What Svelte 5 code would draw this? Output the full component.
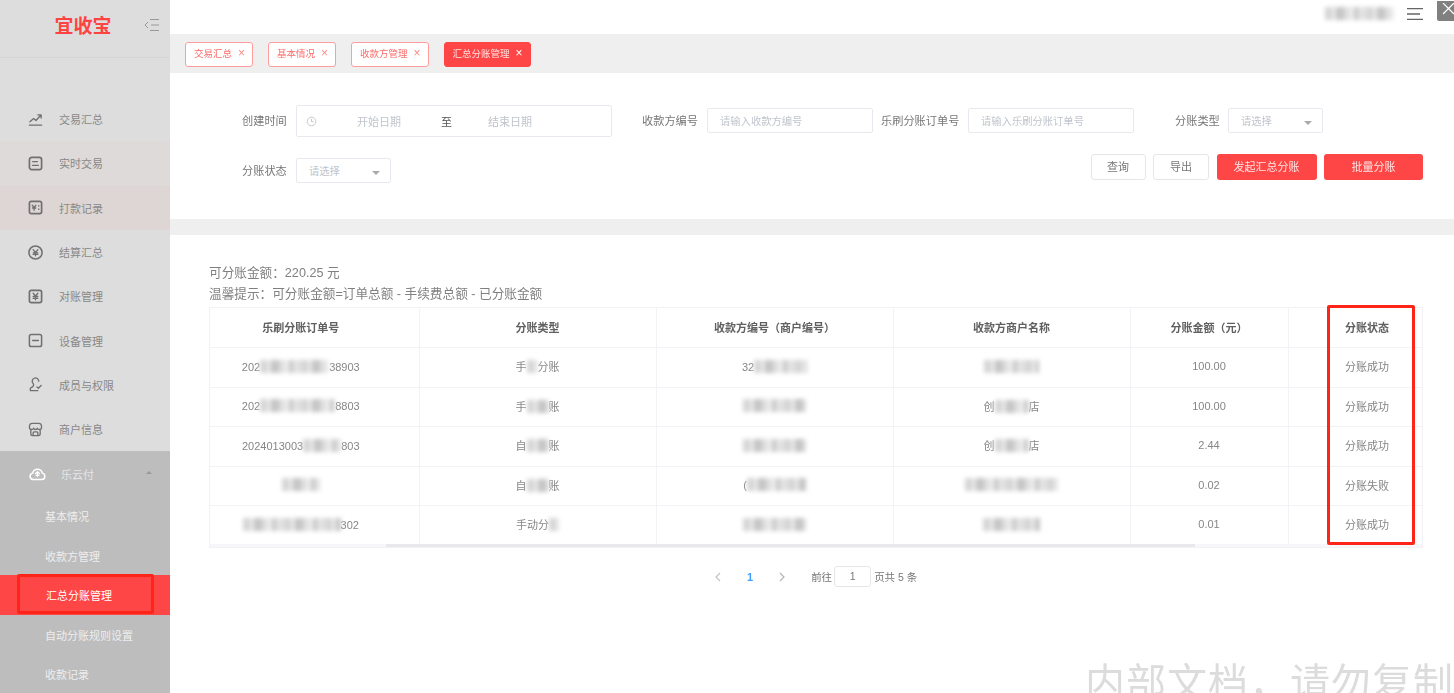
<script>
  const menu = [
    { label: '交易汇总', icon: 'trend', tint: '' },
    { label: '实时交易', icon: 'doc', tint: 'tint1' },
    { label: '打款记录', icon: 'pay', tint: 'tint2' },
    { label: '结算汇总', icon: 'coin', tint: '' },
    { label: '对账管理', icon: 'yen', tint: '' },
    { label: '设备管理', icon: 'device', tint: '' },
    { label: '成员与权限', icon: 'user', tint: '' },
    { label: '商户信息', icon: 'shop', tint: '' }
  ];
  const subs = ['基本情况', '收款方管理', '汇总分账管理', '自动分账规则设置', '收款记录'];
  const tabs = ['交易汇总', '基本情况', '收款方管理', '汇总分账管理'];
  const heads = ['乐刷分账订单号', '分账类型', '收款方编号（商户编号）', '收款方商户名称', '分账金额（元）', '分账状态'];
  // A number is a smudged stretch of that width; a string is legible text.
  const rows = [
    [['202', 69, '38903'], ['手', 11, '分账'], ['32', 53], [55], ['100.00'], ['分账成功']],
    [['202', 75, '8803'], ['手', 22, '账'], [63], ['创', 34, '店'], ['100.00'], ['分账成功']],
    [['2024013003', 38, '803'], ['自', 22, '账'], [63], ['创', 34, '店'], ['2.44'], ['分账成功']],
    [[38], ['自', 22, '账'], ['(', 59], [93], ['0.02'], ['分账失败']],
    [[98, '302'], ['手动分', 10], [63], [57], ['0.01'], ['分账成功']]
  ];
</script>

{#snippet icon(name)}
  <svg class="mi" viewBox="0 0 16 16" fill="none" stroke="currentColor" stroke-width="1.4" stroke-linecap="round" stroke-linejoin="round">
    {#if name === 'trend'}
      <path d="M2 10.500 6 7l2.500 2L13.500 3.500M10.500 3H14v3.500M1.500 14h13" />
    {:else if name === 'doc'}
      <rect x="1.500" y="1.500" width="13" height="13" rx="2.500" stroke-width="1.800" /><path d="M5 6h5M5 10h6" />
    {:else if name === 'pay'}
      <rect x="1.500" y="1.500" width="13" height="13" rx="2" stroke-width="1.800" /><path d="M4.500 5.500 6.500 8l2-2.500M6.500 8v3M4.800 8.500h3.400M11.500 6v.5M11.500 9.500v.5" />
    {:else if name === 'coin'}
      <circle cx="8" cy="8" r="7" stroke-width="1.600" /><path d="M5.500 5 8 8l2.500-3M8 8v3.500M5.500 8.300h5M5.500 10h5" />
    {:else if name === 'yen'}
      <rect x="1.500" y="1.500" width="13" height="13" rx="2" stroke-width="1.800" /><path d="M5.500 4.500 8 7.500l2.500-3M8 7.500v4M5.500 8h5M5.500 10h5" />
    {:else if name === 'device'}
      <path d="M1.500 3.500q0-2 2-2h9q2 0 2 2v9q0 2-2 2h-9q-2 0-2-2zM5 8h6" stroke-width="1.600" />
    {:else if name === 'user'}
      <path d="M11.500 4.500a3.500 3.500 0 1 0-6 2.500c.8 1 .6 2.500-.5 3.300L2.500 12v2.500h8M9.500 10.500l1.500 1.500 3-3" />
    {:else if name === 'shop'}
      <path d="M1.500 5.500q0-4 3-4h7q3 0 3 4 0 2.500-2.300 2.500-1.800 0-2.300-1.500-.4 1.500-1.900 1.500t-1.900-1.500q-.5 1.500-2.300 1.500-2.300 0-2.300-2.500zM3 9v3.500q0 2 2 2h6q2 0 2-2V9M5.500 14v-2.500q0-1 1-1h3q1 0 1 1V14" />
    {/if}
  </svg>
{/snippet}

<div class="page">
  <aside class="side">
    <div class="brand">
      <span class="logo">宜收宝</span>
      <svg class="fold" viewBox="0 0 16 14" fill="none" stroke="currentColor" stroke-width="1"><path d="M4 4 1 7l3 3M6 1.500h9M7 7h8M6 12.500h9" /></svg>
    </div>
    <nav class="nav">
      {#each menu as m}
        <div class="item {m.tint}">{@render icon(m.icon)}<span>{m.label}</span></div>
      {/each}
    </nav>
    <div class="group">
      <div class="group-head">
        <svg class="cloud" viewBox="0 0 18 16" fill="none" stroke="currentColor" stroke-width="1.600" stroke-linejoin="round">
          <path d="M5 14.500h8.500a3.500 3.500 0 0 0 .6-6.900 5.200 5.200 0 0 0-10.200 0A3.500 3.500 0 0 0 5 14.500z" />
          <path d="M6.500 8.500 9 6l2.500 2.500M9 7v4.500M7 10h4" stroke-width="1.300" />
        </svg>
        <span>乐云付</span><i class="up"></i>
      </div>
      {#each subs as s, i}
        <div class="sub" class:on={i === 2}>{s}</div>
      {/each}
    </div>
  </aside>

  <main class="main">
    <header class="top">
      <span class="smudge name"></span>
      <svg class="burger" viewBox="0 0 16 12" fill="none" stroke="#666" stroke-width="1.300"><path d="M0 .7h16M0 6h13M0 11.300h16" /></svg>
      <span class="close"><svg viewBox="0 0 16 16" fill="none" stroke="#fff" stroke-width="1.200"><path d="M1 0l11 11M12 0 1 11" /></svg></span>
    </header>
    <div class="tabs">
      {#each tabs as t, i}
        <span class="tab" class:cur={i === 3}>{t}<b>×</b></span>
      {/each}
    </div>

    <section class="filter">
      <div class="line one">
        <label class="lab">创建时间</label>
        <div class="box range">
          <svg class="clock" viewBox="0 0 12 12" fill="none" stroke="#c0c4cc" stroke-width="1"><circle cx="6" cy="6" r="4.700" /><path d="M6 3v3.200h2.400" /></svg>
          <span class="ph d s1">开始日期</span><span class="to">至</span><span class="ph d s2">结束日期</span>
        </div>
        <label class="lab l2">收款方编号</label>
        <div class="box inp"><span class="ph">请输入收款方编号</span></div>
        <label class="lab l3">乐刷分账订单号</label>
        <div class="box inp"><span class="ph">请输入乐刷分账订单号</span></div>
        <label class="lab l4">分账类型</label>
        <div class="box sel"><span class="ph">请选择</span><i class="down"></i></div>
      </div>
      <div class="line two">
        <label class="lab">分账状态</label>
        <div class="box sel"><span class="ph">请选择</span><i class="down"></i></div>
        <div class="btns">
          <button class="b plain w55">查询</button>
          <button class="b plain w56">导出</button>
          <button class="b red w100">发起汇总分账</button>
          <button class="b red w99">批量分账</button>
        </div>
      </div>
    </section>

    <div class="band"></div>

    <section class="body">
      <p class="note first">可分账金额：220.25 元</p>
      <p class="note">温馨提示：可分账金额=订单总额 - 手续费总额 - 已分账金额</p>
      <div class="tw">
        <div class="clip">
          <table>
            <thead><tr>{#each heads as h}<th>{h}</th>{/each}</tr></thead>
            <tbody>
              {#each rows as r}
                <tr>
                  {#each r as c}
                    <td>{#each c as p}{#if typeof p === 'number'}<span class="smudge" style="width:{p}px"></span>{:else}{p}{/if}{/each}</td>
                  {/each}
                </tr>
              {/each}
            </tbody>
          </table>
        </div>
        <div class="track"><div class="thumb"></div></div>
        <div class="callout"></div>
      </div>
      <div class="pager">
        <svg class="chev" viewBox="0 0 8 10" fill="none" stroke="#c0c4cc" stroke-width="1.200"><path d="M6 1 2 5l4 4" /></svg>
        <span class="num">1</span>
        <svg class="chev" viewBox="0 0 8 10" fill="none" stroke="#b0b4bc" stroke-width="1.200"><path d="M2 1l4 4-4 4" /></svg>
        <span class="goto">前往</span><span class="pg">1</span><span>页共 5 条</span>
      </div>
    </section>
    <div class="wm">内部文档，请勿复制</div>
  </main>
</div>

<style>
  :global(body) { margin: 0; background: #fff; }
  .page {
    display: flex; height: 693px; overflow: hidden; position: relative;
    font: 11px "Liberation Sans", "Noto Sans CJK SC", sans-serif;
    color: #808080; filter: blur(0.35px);
  }
  .side { width: 170px; flex: none; background: #ddd; display: flex; flex-direction: column; position: relative; }
  .brand { flex: none; height: 57px; border-bottom: 1px solid #d6d6d6; position: relative; display: flex; justify-content: center; align-items: center; padding-right: 4px; }
  .logo { color: #ff4343; font-size: 19px; font-weight: 700; margin-top: -9px; }
  .fold { position: absolute; left: 144px; top: 18px; width: 16px; height: 14px; color: #999; }
  .nav { padding-top: 39px; flex: none; }
  .item { height: 44.3px; display: flex; align-items: center; padding-left: 28px; color: #888; font-size: 11px; }
  .item span { margin-left: 16px; }
  .tint1 { background: #dedad9; }
  .tint2 { background: #ddd6d4; }
  .mi { width: 15px; height: 15px; color: #707070; }
  .group { background: #bdbdbd; flex: 1; }
  .group-head { height: 45px; display: flex; align-items: center; padding-left: 29px; color: #e6e6e6; position: relative; }
  .group-head span { margin-left: 15px; }
  .cloud { width: 17px; height: 15px; color: #fff; }
  .up { position: absolute; left: 146px; top: 20px; border: 3px solid transparent; border-bottom-color: #999; border-top: 0; }
  .sub { height: 39.5px; line-height: 42px; padding-left: 45px; color: #eee; position: relative; }
  .sub.on { background: #ff4646; color: #fff; padding-left: 46px; }
  .sub.on::after { content: ""; position: absolute; left: 17px; top: -1px; width: 131px; height: 34px; border: 3px solid #ff2418; border-radius: 2px; }
  .main { flex: 1; min-width: 0; position: relative; display: flex; flex-direction: column; }
  .top { height: 34px; flex: none; position: relative; }
  .name { position: absolute; left: 1155px; top: 7px; width: 69px; height: 14px; display: block; }
  .burger { position: absolute; left: 1237px; top: 8px; width: 16px; height: 12px; }
  .close { position: absolute; left: 1267px; top: 1px; width: 17px; height: 20px; background: #808080; border-radius: 0 0 0 2px; }
  .close svg { width: 16px; height: 16px; display: block; margin: 2px 0 0 5px; }
  .tabs { height: 39px; flex: none; background: #efefef; display: flex; align-items: center; gap: 15px; padding-left: 15px; padding-top: 2px; box-sizing: border-box; }
  .tab { height: 25px; line-height: 21px; box-sizing: border-box; background: #fff; border: 1px solid #ff9d9d; border-radius: 3px; padding: 0 7px 0 8px; color: #ff6a6a; font-size: 9.500px; white-space: nowrap; }
  .tab b { font-weight: 400; margin-left: 6px; font-size: 12px; color: #ff8a8a; }
  .tab.cur { background: #ff4646; border-color: #ff4646; color: #ffe0e0; }
  .tab.cur b { color: #fff; }
  .filter { height: 146px; flex: none; box-sizing: border-box; padding: 32px 31px 0 72px; }
  .line { display: flex; align-items: center; }
  .line.one { height: 32px; }
  .line.two { margin-top: 20px; height: 26px; }
  .lab { color: #777; width: 45px; white-space: nowrap; margin-right: 9px; font-size: 11.200px; }
  .one .lab, .one .inp, .one .sel { margin-bottom: 2px; }
  .box { height: 25px; box-sizing: border-box; border: 1px solid #e8e8ee; border-radius: 2px; display: flex; align-items: center; background: #fff; position: relative; }
  .ph { color: #c0c4cc; font-size: 10.300px; white-space: nowrap; }
  .ph.d { font-size: 11px; }
  .range { height: 32px; width: 316px; }
  .clock { width: 11px; height: 11px; margin-left: 9px; }
  .s1 { margin-left: 40px; }
  .to { color: #555; margin-left: 40px; font-size: 11px; }
  .s2 { margin-left: 36px; }
  .l2 { margin-left: 30px; width: 56px; }
  .inp { width: 166px; padding-left: 12px; }
  .l3 { margin-left: 8px; width: 77px; margin-right: 10px; }
  .l4 { margin-left: 41px; margin-right: 8px; }
  .sel { width: 95px; padding-left: 12px; }
  .down { position: absolute; right: 10px; top: 12px; border: 4px solid transparent; border-top-color: #aaa; border-bottom: 0; }
  .btns { margin-left: auto; display: flex; gap: 7.500px; margin-top: -6px; }
  .b { height: 26px; box-sizing: border-box; border-radius: 3px; font: inherit; font-size: 11px; padding: 0 0 2px; }
  .plain { background: #fff; border: 1px solid #e6e6e6; color: #777; }
  .red { background: #ff4646; border: 0; color: #ffe4e4; }
  .w55 { width: 55px; } .w56 { width: 56px; } .w100 { width: 100px; } .w99 { width: 99px; }
  .band { height: 16px; flex: none; background: #efefef; }
  .body { padding: 29px 31px 0 39px; }
  .note { margin: 0; font-size: 12.650px; line-height: 21px; color: #808080; }
  .first { line-height: 18px; margin-bottom: 2px; }
  .tw { margin-top: 2px; width: 1214px; height: 241px; position: relative; border: 1px solid #f2f2f6; box-sizing: border-box; }
  .clip { overflow: hidden; height: 100%; }
  table { border-collapse: collapse; table-layout: fixed; width: 1236px; }
  th, td { border-right: 1px solid #f2f2f7; border-bottom: 1px solid #f2f2f7; text-align: center; padding: 0 0 2px; height: 39.500px; box-sizing: border-box; white-space: nowrap; }
  th:first-child, td:first-child { padding-right: 27px; }
  th { color: #606060; font-weight: 700; font-size: 11px; }
  td { color: #868686; font-size: 11px; }
  th:nth-child(1) { width: 209px; }
  th:nth-child(2), th:nth-child(3), th:nth-child(4) { width: 237px; }
  th:nth-child(5) { width: 158px; }
  th:nth-child(6) { width: 158px; }
  .smudge {
    display: inline-block; height: 13px; vertical-align: -2px; filter: blur(2px);
    background: repeating-linear-gradient(90deg, #d6d6d6 0 7px, #e8e8e8 7px 11px, #c6c6c6 11px 19px, #dedede 19px 24px, #ececec 24px 29px, #c9c9c9 29px 33px, #e2e2e2 33px 41px);
  }
  .track { position: absolute; left: 0; right: 0; bottom: 0; height: 3px; background: #f7f7fa; }
  .thumb { margin-left: 176px; width: 809px; height: 3px; background: #e9e9ec; }
  .pager { display: flex; align-items: center; height: 21px; margin: 18px 0 0 505px; color: #777; font-size: 10.500px; }
  .chev { width: 8px; height: 10px; }
  .num { color: #409eff; font-weight: 700; margin: 0 25px 0 25px; font-size: 11px; }
  .goto { margin-left: 25px; }
  .pg { width: 37px; height: 21px; margin: 0 3px 0 2px; box-sizing: border-box; border: 1px solid #e6e6ea; border-radius: 3px; text-align: center; line-height: 19px; }
  .wm { position: absolute; left: 915px; top: 660px; font-size: 40px; line-height: 46px; letter-spacing: 1px; color: #dcdcdc; white-space: nowrap; }
  .callout { position: absolute; left: 1117px; top: -3px; width: 82px; height: 234px; border: 3px solid #ff2418; border-radius: 2px; z-index: 2; }
</style>
